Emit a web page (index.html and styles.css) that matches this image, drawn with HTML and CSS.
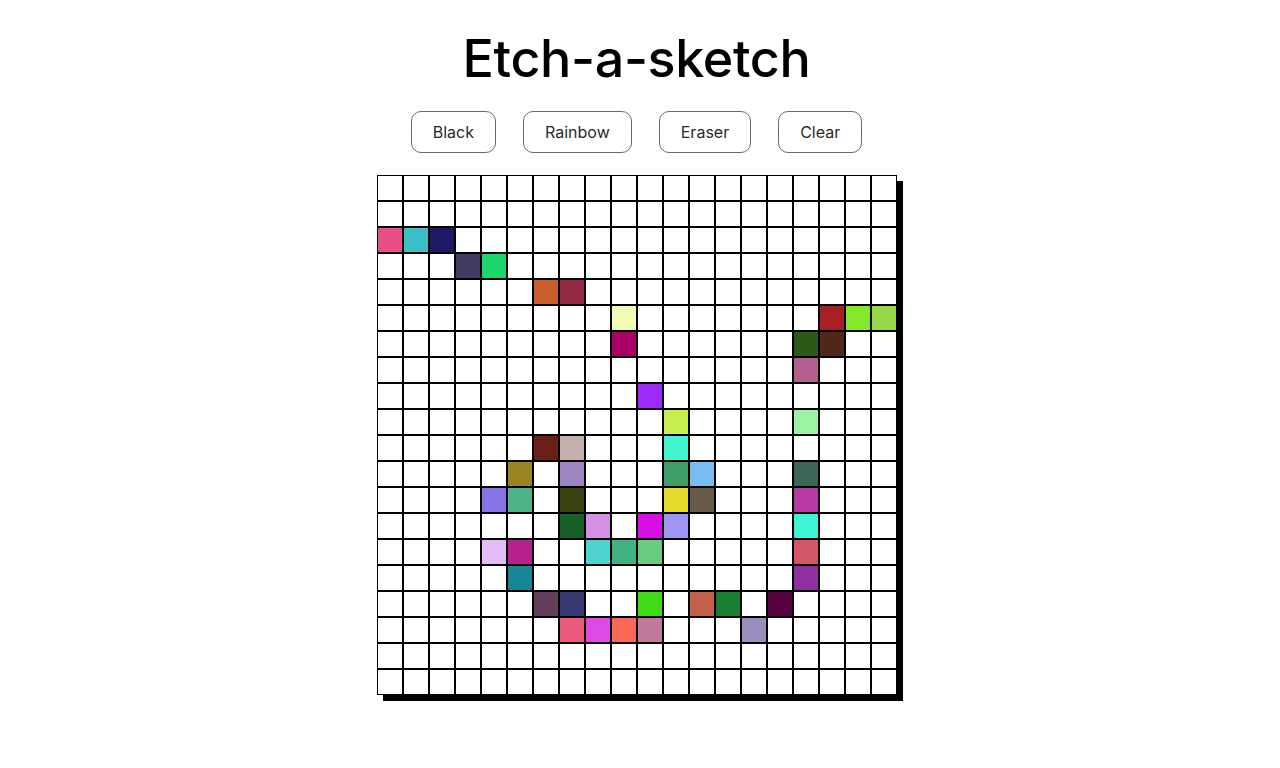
FILE: index.html
```html
<!DOCTYPE html>
<html lang="en">
<head>
<meta charset="utf-8">
<title>Etch-a-sketch</title>
<link rel="stylesheet" href="styles.css">
</head>
<body>
<main class="app">
  <h1 class="title">Etch-a-sketch</h1>
  <div class="controls">
    <button class="btn">Black</button>
    <button class="btn">Rainbow</button>
    <button class="btn">Eraser</button>
    <button class="btn">Clear</button>
  </div>
  <div class="board" id="board"></div>
</main>
<script src="script.js"></script>
</body>
</html>
```

FILE: styles.css
```css
* { box-sizing: border-box; }
html, body { margin: 0; padding: 0; background: #fff; }
body { font-family: Inter, "Noto Sans", sans-serif; color: #000; min-height: 768px; }
.app {
  display: flex;
  flex-direction: column;
  align-items: center;
  padding-right: 7px;
  padding-bottom: 60px;
}
.title {
  margin: 25px 0 0;
  font-size: 52px;
  font-weight: 500;
  line-height: 68px;
  letter-spacing: -0.35px;
}
.controls {
  display: flex;
  gap: 27px;
  margin-top: 18px;
}
.btn {
  font-family: Inter, "Noto Sans", sans-serif;
  font-size: 16px;
  color: #2a2a2a;
  background: #fff;
  border: 1px solid #6a6a6a;
  border-radius: 10px;
  height: 42px;
  padding: 0 21px;
  line-height: 18px;
  cursor: pointer;
}
.board {
  margin-top: 22px;
  width: 520px;
  height: 520px;
  flex: none;
  display: grid;
  grid-template-columns: repeat(20, 26px);
  grid-template-rows: repeat(20, 26px);
  box-shadow: 6px 6px 0 #000;
  background: #fff;
}
.cell {
  border: 1px solid #000;
  background: #fff;
}
```

FILE: script.js
```js
const colored = {
  "2,0":"#e84f88","2,1":"#3bc0c7","2,2":"#1f1a66",
  "3,3":"#3f3b63","3,4":"#1bd66b",
  "4,6":"#cb5e2d","4,7":"#922a45",
  "5,9":"#f3fcb6","5,17":"#a62025","5,18":"#82ea2b","5,19":"#95d64a",
  "6,9":"#a90065","6,16":"#2e5818","6,17":"#512719",
  "7,16":"#b36090",
  "8,10":"#9e2bf5",
  "9,11":"#c8ed4f","9,16":"#9ff1a3",
  "10,6":"#6a2016","10,7":"#c4afad","10,11":"#43f5cf",
  "11,5":"#988421","11,7":"#a085c3","11,11":"#409d67","11,12":"#79bdf1","11,16":"#3d6656",
  "12,4":"#8873e5","12,5":"#4db48a","12,7":"#3a4212","12,11":"#e4db2b","12,12":"#675a47","12,16":"#b63aa2",
  "13,7":"#176029","13,8":"#d690e6","13,10":"#d80ee6","13,11":"#9d96f3","13,16":"#3df3d8",
  "14,4":"#e5bcfa","14,5":"#b6218c","14,8":"#4dd4d1","14,9":"#43b281","14,10":"#6bcb7e","14,16":"#d35569",
  "15,5":"#178798","15,16":"#8f30a0",
  "16,6":"#653e5e","16,7":"#373772","16,10":"#40dc18","16,12":"#c2604a","16,13":"#177e32","16,15":"#570040",
  "17,7":"#ed5b7c","17,8":"#df4ae5","17,9":"#fd6757","17,10":"#c37a9a","17,14":"#9a8ebe"
};
const board = document.getElementById("board");
for (let r = 0; r < 20; r++) {
  for (let c = 0; c < 20; c++) {
    const d = document.createElement("div");
    d.className = "cell";
    const col = colored[r + "," + c];
    if (col) d.style.backgroundColor = col;
    board.appendChild(d);
  }
}
```
